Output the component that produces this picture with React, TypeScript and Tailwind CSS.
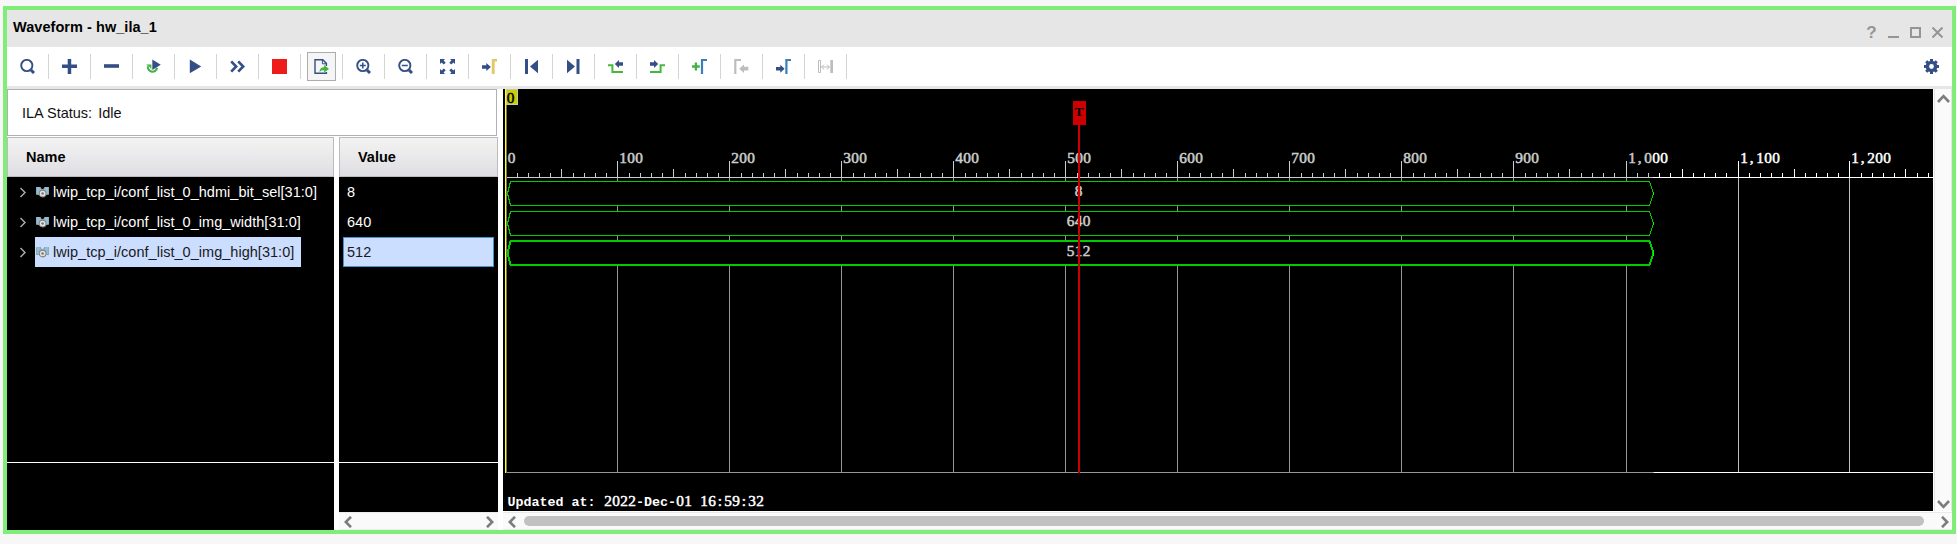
import React from "react";

const NAVY = "#334f86";
const GREEN = "#43b343";
const BLUE = "#3a80b8";
const GREY = "#bdbdbd";

function Icon({ children }: { children: React.ReactNode }) {
  return (
    <svg width="15" height="15" viewBox="0 0 15 15" fill="none" className="block shrink-0">
      {children}
    </svg>
  );
}

const lens = (
  <>
    <circle cx="6.8" cy="6.5" r="5.6" stroke={NAVY} strokeWidth="1.9" />
    <path d="M11 11l3 3" stroke={NAVY} strokeWidth="3" />
  </>
);

const tools: React.ReactNode[] = [
  lens,
  <path d="M5.7 0h3.5v5.6H15v3.5H9.2V15H5.7V9.1H0V5.6h5.7z" fill={NAVY} />,
  <rect y="5.2" width="15" height="3.6" fill={NAVY} />,
  <>
    <path d="M1.9 7.2a4.6 4.6 0 1 0 9.2 1.6" stroke={GREEN} strokeWidth="2.1" />
    <path d="M0 5.6h5.4v5l-1.8-2.5z" fill={GREEN} />
    <path d="M6.3 .6l8.5 5.2-8.5 5.2z" fill={NAVY} />
  </>,
  <path d="M1.8 .6L13.2 7.4 1.8 14.3z" fill={NAVY} />,
  <path d="M1.2 2.3l5 5.2-5 5.2M8.2 2.3l5 5.2-5 5.2" stroke={NAVY} strokeWidth="2.6" />,
  <rect width="15" height="15" fill="#ee1b1b" />,
  <>
    <path d="M12.4 7V4.4L8.8.8H1v13.4h11.4V13" stroke={NAVY} strokeWidth="1.4" />
    <path d="M8.4 1v3.8h4" stroke={NAVY} strokeWidth="1" />
    <path d="M5.5 13c.2-3 1.6-4.6 4.6-4.7V6l4.9 4-4.9 3.4v-2.2c-2 0-3.4.3-4.6 1.8z" fill={GREEN} />
  </>,
  <>
    {lens}
    <path d="M3.8 6.5h6M6.8 3.5v6" stroke={NAVY} strokeWidth="1.5" />
  </>,
  <>
    {lens}
    <path d="M3.8 6.5h6" stroke={NAVY} strokeWidth="1.5" />
  </>,
  <>
    <path d="M0 0h5L3.6 1.5 5.7 3.7 3.8 5.6 1.6 3.5 0 5zM15 0v5l-1.6-1.5-2.2 2.1-1.9-1.9 2.1-2.2L10 0zM0 15v-5l1.6 1.5 2.2-2.1 1.9 1.9-2.1 2.2L5 15zM15 15h-5l1.4-1.5-2.1-2.2 1.9-1.9 2.2 2.1L15 10z" fill={NAVY} />
  </>,
  <>
    <path d="M0 6.2h4.3V4l4.6 4-4.6 4V9.8H0z" fill={NAVY} />
    <path d="M9.8 15V0H15v2.6h-2.4V15z" fill="#e2c766" />
  </>,
  <path d="M1 0h3v15H1zM14 .8v13.4L6 7.5z" fill={NAVY} />,
  <path d="M10.5 0h3v15h-3zM1 .8v13.4l8-6.7z" fill={NAVY} />,
  <>
    <path d="M0 6.3h4.4V13H15" stroke="#45b83c" strokeWidth="2" />
    <path d="M15 3.2h-4V1L6.8 5l4.2 4V6.8h4z" fill={NAVY} />
  </>,
  <>
    <path d="M15 6.3h-4.4V13H0" stroke="#45b83c" strokeWidth="2" />
    <path d="M0 3.2h4V1l4.2 4L4 9V6.8h-4z" fill={NAVY} />
  </>,
  <>
    <path d="M0 7.5h7.8M3.9 3.6v7.8" stroke={GREEN} strokeWidth="2.4" />
    <path d="M10 15V1h5" stroke={BLUE} strokeWidth="2.2" />
  </>,
  <>
    <path d="M1.3 15V1H7" stroke={GREY} strokeWidth="2.2" />
    <path d="M14.3 7.8H10V5.5L5.2 9.7 10 13.9v-2.3h4.3z" fill={GREY} />
  </>,
  <>
    <path d="M0 8h4.3V5.8L8.6 9.8l-4.3 4v-2.2H0z" fill={NAVY} />
    <path d="M10.4 15V1H15" stroke={BLUE} strokeWidth="2.2" />
  </>,
  <>
    <path d="M.5 1.5h2v12h-2z" stroke={GREY} strokeWidth="1" />
    <path d="M12.3 1H15v13h-2.7z" fill={GREY} />
    <path d="M3.5 8h8M6 5.6L3.6 8 6 10.4M9 5.6L11.4 8 9 10.4" stroke={GREY} strokeWidth="1" />
  </>,
];

function Toolbar() {
  return (
    <div className="flex h-[39px] items-center bg-white">
      {tools.map((t, i) => (
        <div key={i} className="flex h-[25px] w-[42px] items-center justify-center border-r border-[#d4d4d4]">
          {i === 7 ? (
            <div className="flex size-[29px] shrink-0 items-center justify-center border border-[#adadad] bg-[#f5f5f5]">
              <Icon>{t}</Icon>
            </div>
          ) : (
            <Icon>{t}</Icon>
          )}
        </div>
      ))}
      <div className="mr-[13px] ml-auto">
        <Icon>
          <circle cx="7.5" cy="7.5" r="4.1" stroke={NAVY} strokeWidth="3.4" />
          <path d="M7.5 0v3M7.5 12v3M0 7.5h3M12 7.5h3M2.2 2.2l2.2 2.2M10.6 10.6l2.2 2.2M2.2 12.8l2.2-2.2M10.6 4.4l2.2-2.2" stroke={NAVY} strokeWidth="3" />
        </Icon>
      </div>
    </div>
  );
}

function TitleBar() {
  return (
    <div className="flex h-[37px] items-center justify-between bg-[#e6e6e6] pr-[9px] pl-[6px]">
      <h1 className="pb-px text-[14.5px] font-bold tracking-[0.05px] text-black">Waveform - hw_ila_1</h1>
      <div className="flex items-center gap-[11px] pt-[8px] text-[#959595]">
        <span className="w-[11px] text-center text-[17px] leading-[11px] font-bold">?</span>
        <svg width="11" height="11" fill="none" stroke="currentColor" strokeWidth="2">
          <path d="M0 10h11" />
        </svg>
        <svg width="11" height="11" fill="none" stroke="currentColor" strokeWidth="2">
          <path d="M1 1h9v9H1z" />
        </svg>
        <svg width="11" height="11" fill="none" stroke="currentColor" strokeWidth="2">
          <path d="M.5.5l10 10M10.5.5l-10 10" />
        </svg>
      </div>
    </div>
  );
}

const signals = [
  { name: "lwip_tcp_i/conf_list_0_hdmi_bit_sel[31:0]", value: "8" },
  { name: "lwip_tcp_i/conf_list_0_img_width[31:0]", value: "640" },
  { name: "lwip_tcp_i/conf_list_0_img_high[31:0]", value: "512", selected: true },
];

function BusIcon() {
  return (
    <svg width="13" height="12" viewBox="0 0 13 12" className="shrink-0">
      <path d="M0 1h4.5l1 2h2l1-2H13v7l-2 1H2L0 8z" fill="#92bdd2" />
      <path d="M0 1v7.5h2M13 1v7.5h-2M4 1l1.5 2.5M9 1L7.5 3.5" stroke="#7d8a92" strokeWidth=".7" fill="none" />
      <circle cx="6.6" cy="7.5" r="3.4" fill="#e4e4e4" stroke="#858585" strokeWidth="1.1" />
      <circle cx="6.6" cy="7.5" r="1.3" fill="#777" />
    </svg>
  );
}

function ColumnHeader({ title }: { title: string }) {
  return (
    <div className="flex h-[40px] items-center border border-[#bcbcc0] bg-linear-to-b from-[#f3f3f3] to-[#dfdfe3] pt-[2px] pl-[18px] text-[14.5px] font-bold text-black">
      {title}
    </div>
  );
}

function Chevron({ d, w, h }: { d: string; w: number; h: number }) {
  return (
    <svg width={w} height={h} fill="none" stroke="#7c7c7c" strokeWidth="2.6" className="shrink-0">
      <path d={d} />
    </svg>
  );
}
const Left = () => <Chevron w={8} h={12} d="M7 .8L1.8 6 7 11.2" />;
const Right = () => <Chevron w={8} h={12} d="M1 .8L6.2 6 1 11.2" />;

function SignalTable() {
  return (
    <div className="flex min-h-0 flex-1 gap-[5px]">
      <div className="flex w-[327px] flex-col">
        <ColumnHeader title="Name" />
        <div className="flex flex-1 flex-col bg-black">
          <div className="h-[285px]">
            {signals.map((s) => (
              <div key={s.name} className="flex h-[30px] items-center pl-[12px]">
                <svg width="8" height="11" fill="none" stroke="#a8a8a8" strokeWidth="1.5" className="mt-px mr-[8px] shrink-0">
                  <path d="M1.5 1l4.5 4.5L1.5 10" />
                </svg>
                <div className={`flex h-[30px] items-center gap-[4px] pr-[7px] pl-[1px] ${s.selected ? "bg-[#ccdeff] text-[#1a1a1a]" : "text-white"}`}>
                  <BusIcon />
                  <span className="pt-px text-[14.5px] tracking-[0.03px] whitespace-nowrap">{s.name}</span>
                </div>
              </div>
            ))}
          </div>
          <div className="h-px bg-white" />
        </div>
      </div>
      <div className="flex w-[159px] flex-col">
        <ColumnHeader title="Value" />
        <div className="flex flex-1 flex-col bg-black">
          <div className="h-[285px] px-[4px]">
            {signals.map((s) => (
              <div key={s.name} className={`flex h-[30px] items-center border pt-px pl-[3px] text-[14.5px] ${s.selected ? "border-[#3f96cf] bg-[#ccdeff] text-[#1a1a1a]" : "border-black text-white"}`}>
                {s.value}
              </div>
            ))}
          </div>
          <div className="h-px bg-white" />
        </div>
        <div className="flex h-[18px] items-center justify-between border-y border-[#ececec] bg-[#fafafa] pt-[2px] pr-[4px] pl-[5px]">
          <Left />
          <Right />
        </div>
      </div>
    </div>
  );
}

const sampleX = (n: number) => Math.floor(505.85 + 1.12 * n + (n >= 1000 && n < 1200 ? 0.15 : 0));
const ticks = Array.from({ length: 127 }, (_, i) => (i + 1) * 10);
const majors = Array.from({ length: 13 }, (_, i) => i * 100);
const lanes = [
  { top: 181, bottom: 205, w: 1, label: "8" },
  { top: 211, bottom: 235, w: 1, label: "640" },
  { top: 240.5, bottom: 264.5, w: 2, label: "512" },
];

/* Fixed-pitch text: each character sits in its own 8px cell. */
function Cells({ x, y, children, fill = "#fff" }: { x: number; y: number; children: string; fill?: string }) {
  const xs = children.split("").map((c, i) => x + 0.2 + i * 8 + (c === "," || c === ":" ? 1.5 : 0)).join(" ");
  return (
    <text x={xs} y={y} fill={fill} className="font-['Liberation_Serif',serif] text-[15.3px]" stroke={fill} strokeWidth="0.5">
      {children}
    </text>
  );
}

function WavePlot() {
  return (
    <svg width="1430" height="422" viewBox="503 89 1430 422" className="block bg-black">
      <g shapeRendering="crispEdges">
        {majors.slice(1).map((n) => (
          <rect key={n} x={sampleX(n)} y="178" width="1" height="294" fill="#bdbdbd" />
        ))}
        {ticks.map((n) => {
          const h = n % 100 === 0 ? 16 : n % 50 === 0 ? 8 : 4;
          return <rect key={n} x={sampleX(n)} y={177 - h} width="1" height={h} fill="#fff" />;
        })}
        <rect x="506" y="177" width="1427" height="1" fill="#fff" />
        <rect x="506" y="472" width="1148" height="1" fill="#bdbdbd" />
        <rect x="1654" y="472" width="279" height="1" fill="#fff" />
        {lanes.map((l) => (
          <path
            key={l.label}
            d={`M510.5 ${l.top + 0.5}H1649.5L1653.5 ${l.top + 12.5}L1649.5 ${l.bottom + 0.5}H510.5L507.5 ${l.top + 12.5}Z`}
            fill="#000"
            stroke="#00ff00"
            strokeWidth={l.w}
          />
        ))}
      </g>
      {majors.map((n) => (
        <Cells key={n} x={n === 0 ? 507.5 : sampleX(n) + 2} y={163}>
          {n.toLocaleString("en-US")}
        </Cells>
      ))}
      {lanes.map((l, i) => (
        <Cells key={l.label} x={1078.5 - l.label.length * 4} y={196 + i * 30}>
          {l.label}
        </Cells>
      ))}
      <rect x="506" y="89" width="1147" height="384" fill="#000" fillOpacity="0.2" />
      <g shapeRendering="crispEdges">
        <rect x="505" y="89" width="1" height="384" fill="#ffff20" />
        <rect x="506" y="89" width="1" height="384" fill="#77774a" />
        <rect x="506" y="89" width="12" height="16" fill="#c8c8b0" />
        <rect x="507" y="90" width="10" height="14" fill="#cccc00" />
        <rect x="1073" y="101" width="13" height="24" fill="#cc0000" />
        <rect x="1078" y="125" width="2" height="348" fill="#cc0000" />
      </g>
      <Cells x={506.5} y={103} fill="#000">0</Cells>
      <text x="1079" y="116" textAnchor="middle" fill="#000" className="font-['Liberation_Serif',serif] text-[13.5px] font-bold">T</text>
      <text x="507.5" y="506" fill="#fff" className="font-['Liberation_Mono',monospace] text-[13.33px] font-bold">Updated at:</text>
      <Cells x={604} y={506}>2022</Cells>
      <text x="636" y="506" fill="#fff" className="font-['Liberation_Mono',monospace] text-[13.33px] font-bold">-Dec-</text>
      <Cells x={676} y={506}>01 16:59:32</Cells>
    </svg>
  );
}

function WavePanel() {
  return (
    <div className="flex min-w-0 flex-1 flex-col">
      <div className="flex h-[422px]">
        <WavePlot />
        <div className="ml-px flex w-[18px] flex-col items-center justify-between border-x border-[#e4e4e4] bg-[#fafafa] pt-[5px] pb-[2px] pl-px">
          <Chevron w={13} h={9} d="M1 8L6.5 2.2 12 8" />
          <Chevron w={13} h={9} d="M1 1L6.5 6.8 12 1" />
        </div>
      </div>
      <div className="mt-px flex h-[18px] items-center border-y border-[#e9e9e9] bg-[#fafafa] pt-[2px] pr-[3px] pl-[5px]">
        <Left />
        <div className="mr-[17px] mb-[3px] ml-[8px] h-[10px] flex-1 rounded-full bg-[#c1c1c1]" />
        <Right />
      </div>
    </div>
  );
}

export default function App() {
  return (
    <div className="h-[544px] w-[1957px] overflow-hidden bg-[#f7f7f7] pt-[6px] pr-px pl-[3px] font-['Liberation_Sans',Arial,sans-serif]">
      <main className="flex h-[528px] flex-col border-4 border-[#80ed78] bg-white">
        <TitleBar />
        <Toolbar />
        <div className="h-[3px] shrink-0 bg-[#e6e6e6]" />
        <div className="flex h-[441px] gap-[5px]">
          <div className="flex w-[491px] flex-col">
            <div className="mb-px flex h-[47px] w-[490px] items-center gap-[6px] border border-[#b0b0b0] pt-[2px] pl-[14px] text-[14.5px] text-[#111]">
              <span>ILA Status:</span>
              <span>Idle</span>
            </div>
            <SignalTable />
          </div>
          <WavePanel />
        </div>
      </main>
    </div>
  );
}
